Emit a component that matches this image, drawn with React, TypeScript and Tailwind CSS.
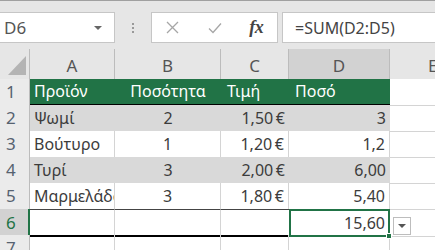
import React from "react";

const font = { fontFamily: '"Noto Sans", "Open Sans", sans-serif' };

const cols = "grid grid-cols-[30px_85px_106px_68px_101px_1fr]";

const rows = [
  { n: "2", a: "Ψωμί", b: "2", c: "1,50\u202F€", d: "3", gray: true },
  { n: "3", a: "Βούτυρο", b: "1", c: "1,20\u202F€", d: "1,2", gray: false },
  { n: "4", a: "Τυρί", b: "3", c: "2,00\u202F€", d: "6,00", gray: true },
  { n: "5", a: "Μαρμελάδα", b: "3", c: "1,80\u202F€", d: "5,40", gray: false },
];

function RowHead({ n, active }: { n: string; active?: boolean }) {
  return (
    <div
      className={`flex items-center pl-[6px] text-[17px] border-b border-[#c8c8c8] ${
        active
          ? "bg-[#d2d2d2] text-[#217346] border-r-2 border-r-[#217346]"
          : "bg-[#ebebeb] text-[#566270] border-r border-r-[#bcbcbc]"
      }`}
    >
      {n}
    </div>
  );
}

export default function App() {
  return (
    <div className="w-[435px] h-[250px] overflow-hidden bg-white" style={font}>
      {/* formula bar */}
      <div className="h-[49px] bg-[#e6e6e6] border-t border-[#a0a0a0] flex items-start pt-[11px]">
        <div className="w-[115px] h-[31px] bg-white border border-l-0 border-[#c6c6c6] flex items-center justify-between pl-[4px] pr-[12px]">
          <span className="text-[17px] text-[#555]">D6</span>
          <span className="w-0 h-0 border-l-[4px] border-r-[4px] border-t-[4px] border-l-transparent border-r-transparent border-t-[#666]" />
        </div>
        <div className="w-[36px] h-[31px] flex flex-col items-center justify-center gap-[2px]">
          <span className="w-[2px] h-[2px] bg-[#999]" />
          <span className="w-[2px] h-[2px] bg-[#999]" />
          <span className="w-[2px] h-[2px] bg-[#999]" />
        </div>
        <div className="w-[127px] h-[31px] bg-white border border-[#c6c6c6] flex">
          <div className="w-[42px] flex items-center justify-center">
            <svg width="13" height="13" viewBox="0 0 13 13">
              <path d="M1 1 L12 12 M12 1 L1 12" stroke="#a6a6a6" strokeWidth="1.3" fill="none" />
            </svg>
          </div>
          <div className="w-[42px] flex items-center justify-center">
            <svg width="14" height="12" viewBox="0 0 14 12">
              <path d="M1 6.5 L5 10.5 L13 1.5" stroke="#a6a6a6" strokeWidth="1.3" fill="none" />
            </svg>
          </div>
          <div className="w-[42px] flex items-center justify-center">
            <span
              className="text-[18px] italic font-bold text-[#444] tracking-[-0.5px]"
              style={{ fontFamily: '"Liberation Serif", serif' }}
            >
              fx
            </span>
          </div>
        </div>
        <div className="flex-1 ml-[4px] h-[31px] bg-white border border-r-0 border-[#c6c6c6] flex items-center pl-[12px]">
          <span className="text-[16px] text-[#444]">=SUM(D2:D5)</span>
        </div>
      </div>

      {/* column headers */}
      <div className={`${cols} h-[30px] bg-[#e6e6e6]`}>
        <div className="border-r border-[#bcbcbc] flex items-end justify-end pr-[3px] pb-[4px]">
          <svg width="18" height="19" viewBox="0 0 18 19">
            <path d="M18 0 L18 19 L0 19 Z" fill="#b4b4b4" />
          </svg>
        </div>
        {["A", "B", "C"].map((l) => (
          <div key={l} className="border-r border-[#bcbcbc] flex items-center justify-center pt-[4px] text-[17px] text-[#555]">
            {l}
          </div>
        ))}
        <div className="bg-[#d2d2d2] border-r border-[#bcbcbc] flex items-center justify-center pt-[4px] text-[17px] text-[#555]">
          D
        </div>
        <div className="flex items-center pl-[38px] pt-[4px] text-[17px] text-[#555]">E</div>
      </div>

      {/* row 1 */}
      <div className={`${cols} h-[26px] text-[16px]`}>
        <RowHead n="1" />
        <div className="col-span-4 grid grid-cols-[85px_106px_68px_101px] bg-[#217346] text-white border-b-2 border-black">
          <div className="flex items-center pl-[4px]">Προϊόν</div>
          <div className="flex items-center justify-center">Ποσότητα</div>
          <div className="flex items-center pl-[6px]">Τιμή</div>
          <div className="flex items-center pl-[6px]">Ποσό</div>
        </div>
        <div className="border-b border-[#d4d4d4]" />
      </div>

      {/* data rows */}
      {rows.map((r) => (
        <div key={r.n} className={`${cols} h-[26px] text-[16px] text-[#3c3c3c]`}>
          <RowHead n={r.n} />
          <div className={`col-span-4 grid grid-cols-[85px_106px_68px_101px] ${r.gray ? "bg-[#d9d9d9]" : "bg-white"}`}>
            <div className={`flex items-center pl-[4px] overflow-hidden whitespace-nowrap ${r.gray ? "" : "border-r border-[#d4d4d4]"}`}>
              {r.a}
            </div>
            <div className={`flex items-center justify-center ${r.gray ? "" : "border-r border-[#d4d4d4]"}`}>{r.b}</div>
            <div className={`flex items-center justify-end pr-[4px] ${r.gray ? "" : "border-r border-[#d4d4d4]"}`}>{r.c}</div>
            <div className={`flex items-center justify-end pr-[4px] ${r.gray ? "" : "border-r border-[#d4d4d4]"}`}>{r.d}</div>
          </div>
          <div className="border-b border-[#d4d4d4]" />
        </div>
      ))}

      {/* row 6 */}
      <div className={`${cols} h-[26px] text-[16px] text-[#3c3c3c]`}>
        <RowHead n="6" active />
        <div className="border-t border-b-2 border-t-[#444] border-b-black border-r border-r-[#d4d4d4]" />
        <div className="border-t border-b-2 border-t-[#444] border-b-black border-r border-r-[#d4d4d4]" />
        <div className="border-t border-b-2 border-t-[#444] border-b-black" />
        <div className="relative border-2 border-[#217346] flex items-center justify-end pr-[3px]">
          15,60
          <span className="absolute -right-[4px] -bottom-[4px] w-[6px] h-[6px] bg-[#217346] border border-white" />
          <span className="absolute -right-[23px] top-[6px] w-[18px] h-[18px] bg-white border border-[#bdbdbd] flex items-center justify-center">
            <span className="w-0 h-0 border-l-[4px] border-r-[4px] border-t-[4px] border-l-transparent border-r-transparent border-t-[#555]" />
          </span>
        </div>
        <div className="border-b border-[#d4d4d4]" />
      </div>

      {/* row 7 */}
      <div className={`${cols} h-[26px] text-[16px]`}>
        <RowHead n="7" />
        <div className="border-r border-[#d4d4d4]" />
        <div className="border-r border-[#d4d4d4]" />
        <div className="border-r border-[#d4d4d4]" />
        <div className="border-r border-[#d4d4d4]" />
        <div />
      </div>
    </div>
  );
}
